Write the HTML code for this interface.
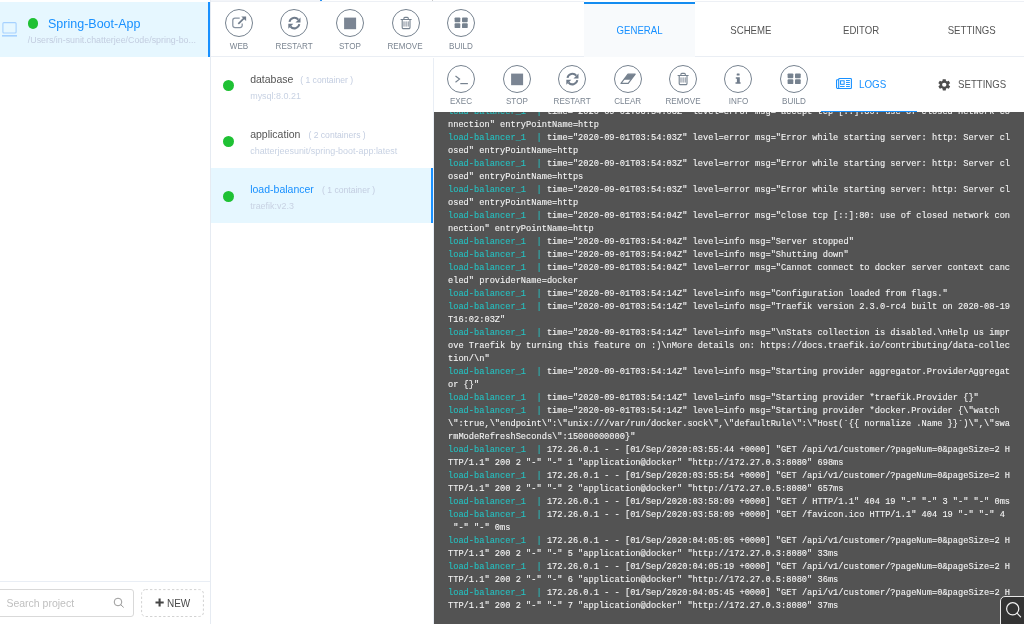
<!DOCTYPE html>
<html><head><meta charset="utf-8"><title>Spring-Boot-App</title>
<style>
*{box-sizing:border-box;margin:0;padding:0}
html,body{width:1024px;height:624px;overflow:hidden;background:#fff}
body{position:relative;font-family:"Liberation Sans",sans-serif;color:#555;will-change:transform}
.abs{position:absolute}
.sx{display:inline-block;transform:scaleX(.92);white-space:nowrap}
/* sidebar */
#side{position:absolute;left:0;top:0;width:211px;height:624px;border-right:1px solid #e6ebf2}
#proj{position:absolute;left:0;top:1.6px;width:210.4px;height:55.2px;background:#e6f7ff}
#proj:after{content:"";position:absolute;right:0;top:0;width:2.2px;height:100%;background:#1890ff}
.dot{position:absolute;width:11px;height:11px;border-radius:50%;background:#1fc134}
#ptitle{position:absolute;left:48.4px;top:14.1px;transform:scaleX(.94);font-size:13.3px;line-height:16px;color:#1890ff;white-space:nowrap;transform-origin:0 50%}
#ppath{position:absolute;left:27.8px;top:33.3px;font-size:8.86px;line-height:11px;color:#c3cde0;white-space:nowrap;transform-origin:0 50%}
#sfoot{position:absolute;left:0;top:581px;width:210px;height:43px;border-top:1px solid #e9eef5}
#sinput{position:absolute;left:-4px;top:7.4px;width:138px;height:27.3px;border:1px solid #d9d9d9;border-radius:3px}
#sinput span{position:absolute;left:9.4px;top:5.8px;font-size:10.5px;line-height:14px;color:#bfbfbf;white-space:nowrap}
#newbtn{position:absolute;left:141px;top:8px;width:62px;height:27px;border:1px dashed #d0d0d0;border-radius:3px}
/* top bar */
#top{position:absolute;left:211px;top:0;width:813px;height:57px;border-top:1px solid transparent;border-bottom:1px solid #eaeef4}
#top:before{content:"";position:absolute;left:0;top:0;width:100%;height:.9px;background:#edf0f5}
.btn{position:absolute;width:56px;height:54px}
.btn .c{position:absolute;left:14px;top:0;width:28px;height:28px;border:1px solid #76828f;border-radius:50%}
.btn .c svg{position:absolute;left:0;top:0;width:26px;height:26px}
.btn .l{position:absolute;left:-12px;width:80px;top:31.4px;text-align:center;font-size:8.8px;line-height:10px;color:#7b8591;letter-spacing:0}
.tab{position:absolute;top:-1px;width:110.7px;height:57px;text-align:center;font-size:10.7px;line-height:12px;padding-top:24.3px;padding-left:.6px;color:#555}
.tab .sx{transform:scaleX(.9)}
.tab.on{background:linear-gradient(#fff 0,#fff 4px,#f8fafc 4.5px);color:#1890ff}
.tab.on:before{content:"";position:absolute;left:0;top:1.5px;width:100%;height:2px;background:#148cf0}
/* list */
#list{position:absolute;left:211px;top:58px;width:223px;height:566px;border-right:1px solid #e9eef5}
.row{position:absolute;left:0;width:222px;height:55px}
.rowbg{position:absolute;left:0;top:109.8px;width:222.3px;height:55.2px;background:#e6f7ff}
.rowbg:after{content:"";position:absolute;right:0;top:0;width:2.2px;height:100%;background:#1890ff}
.row .dot{left:12px;top:22.3px}
.row .t{position:absolute;left:39.2px;top:13.5px;font-size:10.5px;line-height:14px;color:#555;white-space:nowrap}
.row.on .t{color:#1890ff}
.row .n{position:absolute;top:14.5px;font-size:8.6px;line-height:14px;color:#c3cde0;white-space:nowrap}
.row .s{position:absolute;left:39.2px;top:31.6px;font-size:8.95px;line-height:12px;color:#c8d2e3;white-space:nowrap}
/* right */
#bar2{position:absolute;left:434px;top:58px;width:590px;height:54px;z-index:2}
#logs{position:absolute;left:434px;top:112px;width:590px;height:512px;background:#535353;overflow:hidden}
#logtxt{position:absolute;left:13.6px;top:-5.7px;-webkit-text-stroke:0.1px;will-change:transform;font-family:"Liberation Mono",monospace;font-size:8.68px;line-height:13px;color:#f4f4f4}
#logtxt div{height:13px;white-space:pre}
#logtxt b{font-weight:normal;color:#25c0c0}
#find{position:absolute;left:1000.3px;top:596.2px;width:30px;height:34px;background:#333;border:1px solid #e8e8e8;border-radius:5px 0 0 0}
</style></head><body>
<div id="side">
  <div id="proj">
    <svg class="abs" style="left:2px;top:20.4px" width="15" height="15" viewBox="0 0 15 15"><rect x="0.9" y="0.6" width="13.2" height="10.4" rx="1" fill="none" stroke="#a5d1ff" stroke-width="1.1"/><rect x="0" y="13" width="15" height="1.6" fill="#a5d1ff"/></svg>
    <div class="dot" style="left:27.5px;top:16.4px;width:10.6px;height:10.6px"></div>
    <div id="ptitle">Spring-Boot-App</div>
    <div id="ppath">/Users/in-sunit.chatterjee/Code/spring-bo...</div>
  </div>
  <div id="sfoot">
    <div id="sinput"><span>Search project</span>
      <svg class="abs" style="left:116px;top:6.4px" width="12" height="12" viewBox="0 0 12 12"><circle cx="5" cy="5" r="3.8" fill="none" stroke="#9a9a9a" stroke-width="1"/><path d="M7.8 7.8 L10.4 10.2" stroke="#9a9a9a" stroke-width="1" stroke-linecap="round"/></svg>
    </div>
    <svg class="abs" style="left:140.6px;top:7.1px" width="64" height="29" viewBox="0 0 64 29"><rect x="0.6" y="0.6" width="61.8" height="26.9" rx="4" fill="#fff" stroke="#d2d2d2" stroke-width="1" stroke-dasharray="2.3 2.1"/><path d="M14.5 13.5h8.2M18.6 9.4v8.2" stroke="#454545" stroke-width="2.1"/></svg>
    <div class="abs" style="left:166.6px;top:14.8px;font-size:10.3px;line-height:14px;color:#4a4a4a;white-space:nowrap;transform:scaleX(.97);transform-origin:0 50%">NEW</div>
  </div>
</div>

<div id="top">
  <div class="abs" style="left:0;top:-1px;width:109px;height:1px;background:#f3f5f9"></div><div class="abs" style="left:109px;top:-1px;width:2px;height:1px;background:#2a93f5"></div><div class="abs" style="left:221px;top:-1px;width:1px;height:1px;background:#c9c9c9"></div>
  <div class="btn" style="left:0px;top:8.35px"><div class="c"><svg viewBox="0 0 26 26"><path d="M13.7 8H9a2.2 2.2 0 0 0-2.2 2.2v5.3a2.2 2.2 0 0 0 2.2 2.2h5a2.2 2.2 0 0 0 2.2-2.2v-1.9" fill="none" stroke="#8792a0" stroke-width="1.25"/><path d="M12.3 13.8L18.4 7.9" stroke="#707c8b" stroke-width="1.7" fill="none"/><path d="M15.3 6.5h4.8v4.6z" fill="#707c8b"/></svg></div><div class="l"><span class="sx">WEB</span></div></div>
  <div class="btn" style="left:55.2px;top:8.35px"><div class="c"><svg viewBox="0 0 26 26"><g><path d="M8.5 11.9A5 5 0 0 1 17.3 9.6" fill="none" stroke="#707c8b" stroke-width="2"/><path d="M18.3 14.2A5 5 0 0 1 9.5 16.5" fill="none" stroke="#707c8b" stroke-width="2"/><path d="M19.5 7.4v5h-5z" fill="#707c8b"/><path d="M7.3 18.7v-5h5z" fill="#707c8b"/></g></svg></div><div class="l"><span class="sx">RESTART</span></div></div>
  <div class="btn" style="left:111px;top:8.35px"><div class="c"><svg viewBox="0 0 26 26"><rect x="7.1" y="7.6" width="12" height="11.6" fill="#7b8593"/></svg></div><div class="l"><span class="sx">STOP</span></div></div>
  <div class="btn" style="left:166.5px;top:8.35px"><div class="c"><svg viewBox="0 0 26 26"><g fill="none" stroke="#76828f"><path d="M7.6 9.5h11M10.9 9.3v-1a.9.9 0 0 1 .9-.9h2.6a.9.9 0 0 1 .9.9v1" stroke-width="1.1"/><path d="M9.2 9.8v7.6a1.2 1.2 0 0 0 1.2 1.2h5.4a1.2 1.2 0 0 0 1.2-1.2V9.8" stroke-width="1.1"/><path d="M11 11.4v5.2M13.1 11.4v5.2M15.2 11.4v5.2" stroke-width="0.95"/></g></svg></div><div class="l"><span class="sx">REMOVE</span></div></div>
  <div class="btn" style="left:222px;top:8.35px"><div class="c"><svg viewBox="0 0 26 26"><g fill="#76828f"><rect x="6.6" y="7.4" width="5.7" height="4.8" rx="0.9"/><rect x="14" y="7.4" width="5.7" height="4.8" rx="0.9"/><rect x="6.6" y="13.3" width="5.7" height="4.8" rx="0.9"/><rect x="14" y="13.3" width="5.7" height="4.8" rx="0.9"/></g></svg></div><div class="l"><span class="sx">BUILD</span></div></div>

  <div class="tab on" style="left:373.3px"><span class="sx">GENERAL</span></div>
  <div class="tab" style="left:484px"><span class="sx">SCHEME</span></div>
  <div class="tab" style="left:594.7px"><span class="sx">EDITOR</span></div>
  <div class="tab" style="left:705.4px"><span class="sx">SETTINGS</span></div>
</div>


<div id="list">
  <div class="rowbg"></div>
  <div class="row" style="top:0"><div class="dot"></div><div class="t">database</div><div class="n" style="left:89.2px">( 1 container )</div><div class="s">mysql:8.0.21</div></div>
  <div class="row" style="top:55.35px"><div class="dot"></div><div class="t">application</div><div class="n" style="left:97.4px">( 2 containers )</div><div class="s">chatterjeesunit/spring-boot-app:latest</div></div>
  <div class="row on" style="top:110.7px"><div class="dot"></div><div class="t">load-balancer</div><div class="n" style="left:111px">( 1 container )</div><div class="s">traefik:v2.3</div></div>
</div>

<div id="bar2">
  <div class="btn" style="left:-0.8px;top:6.7px"><div class="c"><svg viewBox="0 0 26 26"><path d="M7.5 10l4 3.1-4 3.1" fill="none" stroke="#76828f" stroke-width="1.2"/><path d="M12.3 17.6h7.6" stroke="#76828f" stroke-width="1.2"/></svg></div><div class="l"><span class="sx">EXEC</span></div></div>
  <div class="btn" style="left:54.9px;top:6.7px"><div class="c"><svg viewBox="0 0 26 26"><rect x="7.1" y="7.6" width="12" height="11.6" fill="#7b8593"/></svg></div><div class="l"><span class="sx">STOP</span></div></div>
  <div class="btn" style="left:110px;top:6.7px"><div class="c"><svg viewBox="0 0 26 26"><g><path d="M8.5 11.9A5 5 0 0 1 17.3 9.6" fill="none" stroke="#707c8b" stroke-width="2"/><path d="M18.3 14.2A5 5 0 0 1 9.5 16.5" fill="none" stroke="#707c8b" stroke-width="2"/><path d="M19.5 7.4v5h-5z" fill="#707c8b"/><path d="M7.3 18.7v-5h5z" fill="#707c8b"/></g></svg></div><div class="l"><span class="sx">RESTART</span></div></div>
  <div class="btn" style="left:165.5px;top:6.7px"><div class="c"><svg viewBox="0 0 26 26"><path d="M13 8.2h7.2l-7 9.2H6z" fill="none" stroke="#76828f" stroke-width="1.2" stroke-linejoin="round"/><path d="M13 8.2h7.2l-4.3 5.6H8.7z" fill="#76828f"/></svg></div><div class="l"><span class="sx">CLEAR</span></div></div>
  <div class="btn" style="left:221px;top:6.7px"><div class="c"><svg viewBox="0 0 26 26"><g fill="none" stroke="#76828f"><path d="M7.6 9.5h11M10.9 9.3v-1a.9.9 0 0 1 .9-.9h2.6a.9.9 0 0 1 .9.9v1" stroke-width="1.1"/><path d="M9.2 9.8v7.6a1.2 1.2 0 0 0 1.2 1.2h5.4a1.2 1.2 0 0 0 1.2-1.2V9.8" stroke-width="1.1"/><path d="M11 11.4v5.2M13.1 11.4v5.2M15.2 11.4v5.2" stroke-width="0.95"/></g></svg></div><div class="l"><span class="sx">REMOVE</span></div></div>
  <div class="btn" style="left:276.4px;top:6.7px"><div class="c"><svg viewBox="0 0 26 26"><rect x="11.7" y="7.4" width="2.9" height="2" rx="0.5" fill="#707c8b"/><path d="M10.8 11.2h4v5h.8v1.6h-5.1v-1.6h1.4v-3.5h-1.1z" fill="#707c8b"/></svg></div><div class="l"><span class="sx">INFO</span></div></div>
  <div class="btn" style="left:331.9px;top:6.7px"><div class="c"><svg viewBox="0 0 26 26"><g fill="#76828f"><rect x="6.6" y="7.4" width="5.7" height="4.8" rx="0.9"/><rect x="14" y="7.4" width="5.7" height="4.8" rx="0.9"/><rect x="6.6" y="13.3" width="5.7" height="4.8" rx="0.9"/><rect x="14" y="13.3" width="5.7" height="4.8" rx="0.9"/></g></svg></div><div class="l"><span class="sx">BUILD</span></div></div>

  <svg class="abs" style="left:402.1px;top:19.95px" width="16" height="11" viewBox="0 0 16 11" fill="none" stroke="#1890ff"><rect x="2.7" y="0.55" width="12.7" height="9.9" rx="0.8" stroke-width="1.1"/><path d="M2.7 1.7H1.3a.75.75 0 0 0-.75.75v6.7a1.3 1.3 0 0 0 1.3 1.3H4" stroke-width="1.1"/><rect x="4.55" y="2.8" width="3.6" height="3.5" stroke-width="1"/><path d="M10 2.5h3.85M10 4.45h3.85M10 6.5h3.85M10 8.5h3.85M4.05 8.5h4.6" stroke-width="0.95"/></svg>
  <div class="abs" style="left:425.2px;top:19.55px;font-size:10.7px;line-height:12px;color:#1890ff"><span class="sx" style="transform-origin:0 50%">LOGS</span></div>
  <div class="abs" style="left:387.1px;top:52.7px;width:95.9px;height:1.7px;background:#1890ff;z-index:3"></div>

  <svg class="abs" style="left:503px;top:20.2px" width="14.5" height="13.5" viewBox="0 0 24 24" preserveAspectRatio="none"><path fill="#4d4d4d" d="M19.4 13c.04-.33.06-.66.06-1s-.02-.67-.06-1l2.1-1.65a.5.5 0 0 0 .12-.64l-2-3.46a.5.5 0 0 0-.61-.22l-2.49 1a7.3 7.3 0 0 0-1.69-.98l-.38-2.65A.49.49 0 0 0 14 2h-4a.49.49 0 0 0-.49.42l-.38 2.65c-.61.25-1.17.59-1.69.98l-2.49-1a.5.5 0 0 0-.61.22l-2 3.46a.49.49 0 0 0 .12.64L4.6 11c-.04.33-.06.66-.06 1s.02.67.06 1l-2.1 1.65a.5.5 0 0 0-.12.64l2 3.46c.12.22.39.3.61.22l2.49-1c.52.4 1.08.73 1.69.98l.38 2.65c.03.24.24.42.49.42h4c.25 0 .46-.18.49-.42l.38-2.65c.61-.25 1.17-.59 1.69-.98l2.49 1c.23.09.49 0 .61-.22l2-3.46a.5.5 0 0 0-.12-.64L19.4 13zM12 15.6a3.6 3.6 0 1 1 0-7.2 3.6 3.6 0 0 1 0 7.2z"/></svg>
  <div class="abs" style="left:523.6px;top:20.3px;font-size:10.5px;line-height:12px;color:#555"><span class="sx" style="transform-origin:0 50%">SETTINGS</span></div>
</div>

<div id="logs"><div id="logtxt">
<div><b>load-balancer_1  | </b>time="2020-09-01T03:54:03Z" level=error msg="accept tcp [::]:80: use of closed network co</div>
<div>nnection" entryPointName=http</div>
<div><b>load-balancer_1  | </b>time="2020-09-01T03:54:03Z" level=error msg="Error while starting server: http: Server cl</div>
<div>osed" entryPointName=http</div>
<div><b>load-balancer_1  | </b>time="2020-09-01T03:54:03Z" level=error msg="Error while starting server: http: Server cl</div>
<div>osed" entryPointName=https</div>
<div><b>load-balancer_1  | </b>time="2020-09-01T03:54:03Z" level=error msg="Error while starting server: http: Server cl</div>
<div>osed" entryPointName=http</div>
<div><b>load-balancer_1  | </b>time="2020-09-01T03:54:04Z" level=error msg="close tcp [::]:80: use of closed network con</div>
<div>nection" entryPointName=http</div>
<div><b>load-balancer_1  | </b>time="2020-09-01T03:54:04Z" level=info msg="Server stopped"</div>
<div><b>load-balancer_1  | </b>time="2020-09-01T03:54:04Z" level=info msg="Shutting down"</div>
<div><b>load-balancer_1  | </b>time="2020-09-01T03:54:04Z" level=error msg="Cannot connect to docker server context canc</div>
<div>eled" providerName=docker</div>
<div><b>load-balancer_1  | </b>time="2020-09-01T03:54:14Z" level=info msg="Configuration loaded from flags."</div>
<div><b>load-balancer_1  | </b>time="2020-09-01T03:54:14Z" level=info msg="Traefik version 2.3.0-rc4 built on 2020-08-19</div>
<div>T16:02:03Z"</div>
<div><b>load-balancer_1  | </b>time="2020-09-01T03:54:14Z" level=info msg="\nStats collection is disabled.\nHelp us impr</div>
<div>ove Traefik by turning this feature on :)\nMore details on: https://docs.traefik.io/contributing/data-collec</div>
<div>tion/\n"</div>
<div><b>load-balancer_1  | </b>time="2020-09-01T03:54:14Z" level=info msg="Starting provider aggregator.ProviderAggregat</div>
<div>or {}"</div>
<div><b>load-balancer_1  | </b>time="2020-09-01T03:54:14Z" level=info msg="Starting provider *traefik.Provider {}"</div>
<div><b>load-balancer_1  | </b>time="2020-09-01T03:54:14Z" level=info msg="Starting provider *docker.Provider {\"watch</div>
<div>\":true,\"endpoint\":\"unix:///var/run/docker.sock\",\"defaultRule\":\"Host(`{{ normalize .Name }}`)\",\"swa</div>
<div>rmModeRefreshSeconds\":15000000000}"</div>
<div><b>load-balancer_1  | </b>172.26.0.1 - - [01/Sep/2020:03:55:44 +0000] "GET /api/v1/customer/?pageNum=0&amp;pageSize=2 H</div>
<div>TTP/1.1" 200 2 "-" "-" 1 "application@docker" "http://172.27.0.3:8080" 698ms</div>
<div><b>load-balancer_1  | </b>172.26.0.1 - - [01/Sep/2020:03:55:54 +0000] "GET /api/v1/customer/?pageNum=0&amp;pageSize=2 H</div>
<div>TTP/1.1" 200 2 "-" "-" 2 "application@docker" "http://172.27.0.5:8080" 657ms</div>
<div><b>load-balancer_1  | </b>172.26.0.1 - - [01/Sep/2020:03:58:09 +0000] "GET / HTTP/1.1" 404 19 "-" "-" 3 "-" "-" 0ms</div>
<div><b>load-balancer_1  | </b>172.26.0.1 - - [01/Sep/2020:03:58:09 +0000] "GET /favicon.ico HTTP/1.1" 404 19 "-" "-" 4</div>
<div> "-" "-" 0ms</div>
<div><b>load-balancer_1  | </b>172.26.0.1 - - [01/Sep/2020:04:05:05 +0000] "GET /api/v1/customer/?pageNum=0&amp;pageSize=2 H</div>
<div>TTP/1.1" 200 2 "-" "-" 5 "application@docker" "http://172.27.0.3:8080" 33ms</div>
<div><b>load-balancer_1  | </b>172.26.0.1 - - [01/Sep/2020:04:05:19 +0000] "GET /api/v1/customer/?pageNum=0&amp;pageSize=2 H</div>
<div>TTP/1.1" 200 2 "-" "-" 6 "application@docker" "http://172.27.0.5:8080" 36ms</div>
<div><b>load-balancer_1  | </b>172.26.0.1 - - [01/Sep/2020:04:05:45 +0000] "GET /api/v1/customer/?pageNum=0&amp;pageSize=2 H</div>
<div>TTP/1.1" 200 2 "-" "-" 7 "application@docker" "http://172.27.0.3:8080" 37ms</div></div></div>
<div id="find"><svg class="abs" style="left:3px;top:4px" width="20" height="20" viewBox="0 0 20 20"><circle cx="8.7" cy="7.8" r="6.1" fill="none" stroke="#f2f2f2" stroke-width="1.2"/><path d="M13 12.1L16.6 15.8" stroke="#f2f2f2" stroke-width="1.2" stroke-linecap="round"/></svg></div>
</body></html>
